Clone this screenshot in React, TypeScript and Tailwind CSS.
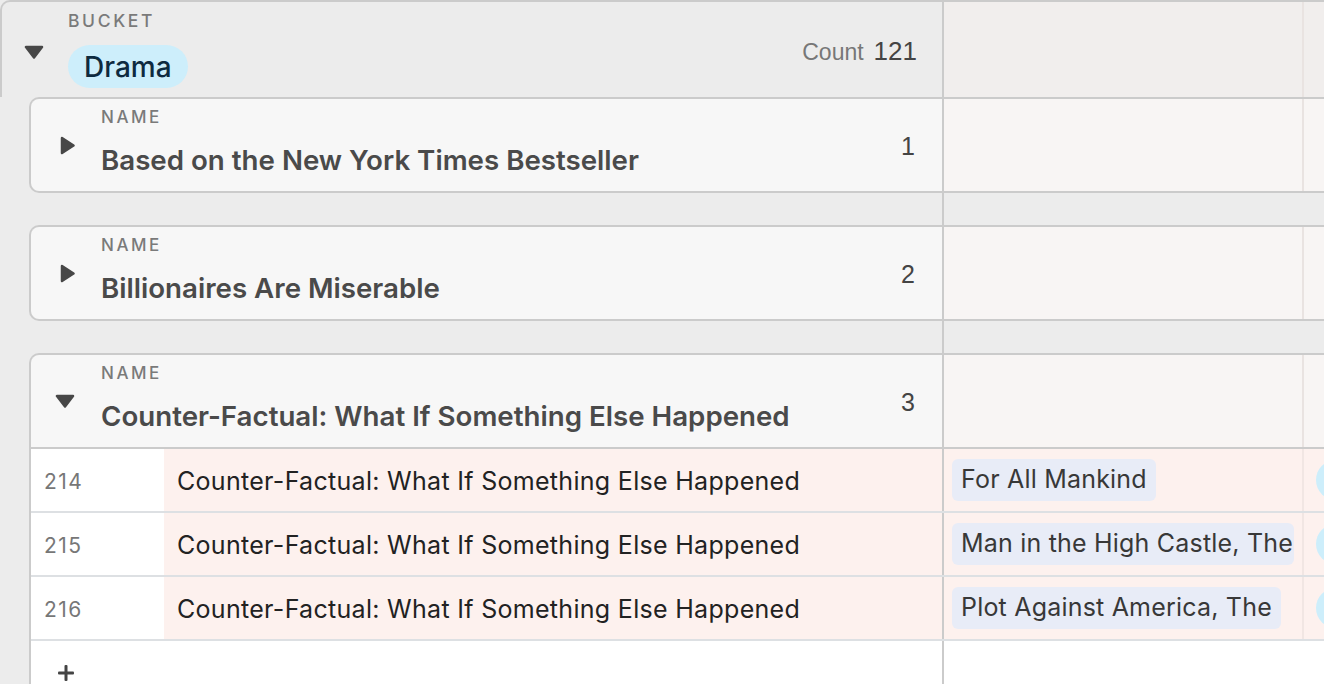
import React from "react";

const FONT = { fontFamily: 'Inter, "Noto Sans", sans-serif' };

function TriDown({ className = "" }: { className?: string }) {
  return (
    <svg width="20" height="14" viewBox="0 0 20 14" className={className}>
      <path d="M2 2 H18 L10 12.5 Z" fill="#474747" stroke="#474747" strokeWidth="2.5" strokeLinejoin="round" />
    </svg>
  );
}

function TriRight() {
  return (
    <svg width="15" height="19" viewBox="0 0 15 19">
      <path d="M2 2 L13.5 9.5 L2 17 Z" fill="#474747" stroke="#474747" strokeWidth="2.5" strokeLinejoin="round" />
    </svg>
  );
}

function Plus() {
  return (
    <svg width="16" height="16" viewBox="0 0 16 16">
      <rect x="6.5" y="0" width="3" height="16" rx="1" fill="#444" />
      <rect x="0" y="6.5" width="16" height="3" rx="1" fill="#444" />
    </svg>
  );
}

function RightCells({ bg, border = "" }: { bg: string; border?: string }) {
  return (
    <>
      <div className="w-[2px] shrink-0 bg-[#cbcbcb]" />
      <div className={`w-[358px] shrink-0 ${bg} ${border}`} />
      <div className={`w-[2px] shrink-0 bg-[#e9e3e1] ${border}`} />
      <div className={`flex-1 ${bg} ${border}`} />
    </>
  );
}

function GroupCard({ title, count, open = false }: { title: string; count: string; open?: boolean }) {
  return (
    <div className="flex h-[96px]">
      <div className="w-[29px] shrink-0" />
      <div
        className={`w-[913px] shrink-0 flex items-center bg-[#f7f7f7] border-[#cbcbcb] ${
          open ? "border-t-2 border-l-2 border-b-2 rounded-tl-[10px]" : "border-t-2 border-l-2 border-b-2 rounded-l-[10px]"
        }`}
      >
        <div className={`${open ? "pl-[24px] w-[44px]" : "pl-[29px] w-[44px]"} shrink-0 flex items-center`}>
          {open ? <TriDown /> : <TriRight />}
        </div>
        <div className="ml-[26px] self-start pt-[8px] flex flex-col">
          <div className="text-[17px] leading-[20px] tracking-[0.15em] font-medium text-[#7a7a7a]">NAME</div>
          <div className="mt-[16px] text-[27.7px] leading-[34px] font-semibold text-[#4a4a4a] whitespace-nowrap">{title}</div>
        </div>
        <div className="flex-1" />
        <div className="pr-[27px] pt-[4px] text-[25px] text-[#444]" style={{ fontFamily: '"Liberation Sans", Arial, sans-serif' }}>
          {count}
        </div>
      </div>
      <RightCells bg="bg-[#f8f5f4]" border="border-y-2 border-[#cbcbcb]" />
    </div>
  );
}

function Gap() {
  return (
    <div className="flex h-[32px]">
      <div className="w-[942px] shrink-0" />
      <div className="w-[2px] shrink-0 bg-[#cbcbcb]" />
      <div className="flex-1" />
    </div>
  );
}

function DataRow({ n, name, tag }: { n: string; name: string; tag: string }) {
  return (
    <div className="flex h-[64px] border-b-2 border-[#dde0e3]">
      <div className="w-[133px] shrink-0 bg-white flex items-center pl-[13px] pt-[3px] text-[21px] tracking-[1.5px] text-[#777]">{n}</div>
      <div className="w-[778px] shrink-0 bg-[#fdf1ee] flex items-center pl-[13px] pt-[3px] text-[25px] tracking-[0.3px] text-[#222] whitespace-nowrap">
        {name}
      </div>
      <div className="w-[2px] shrink-0 bg-[#cbcbcb]" />
      <div className="w-[358px] shrink-0 bg-[#fdf1ee] flex items-center px-[8px] overflow-hidden">
        <div className="h-[42px] max-w-[342px] overflow-hidden whitespace-nowrap rounded-[6px] bg-[#e8ecf7] px-[9px] flex items-center text-[25px] tracking-[0.2px] text-[#383838]">
          {tag}
        </div>
      </div>
      <div className="w-[2px] shrink-0 bg-[#f1e6e3]" />
      <div className="flex-1 bg-[#fdf1ee] flex items-center pl-[12px] overflow-hidden">
        <div className="h-[40px] w-[40px] rounded-full bg-[#cdeefb]" />
      </div>
    </div>
  );
}

export default function App() {
  return (
    <div className="w-[1324px] h-[684px] overflow-hidden bg-[#ececec]" style={FONT}>
      <div className="w-[1420px]">
        {/* bucket header */}
        <div className="flex h-[97px] border-t-2 border-l-2 border-[#cbcbcb] rounded-tl-[10px]">
          <div className="w-[940px] shrink-0 flex">
            <div className="pl-[22px] pt-[43px] shrink-0">
              <TriDown />
            </div>
            <div className="ml-[24px] flex flex-col">
              <div className="mt-[9px] text-[17.5px] leading-[20px] tracking-[0.15em] font-medium text-[#7a7a7a]">BUCKET</div>
              <div className="mt-[14px] h-[43px] rounded-full bg-[#cdeefb] px-[16px] flex items-center text-[28px] font-medium text-[#0e2a3f]">
                Drama
              </div>
            </div>
            <div className="flex-1" />
            <div className="pr-[25px] pt-[30px] flex items-baseline gap-[10px]" style={{ fontFamily: '"Liberation Sans", Arial, sans-serif' }}>
              <span className="text-[23px] text-[#777]">Count</span>
              <span className="text-[26px] text-[#444]">121</span>
            </div>
          </div>
          <RightCells bg="bg-[#f1eeed]" />
        </div>

        <GroupCard title="Based on the New York Times Bestseller" count="1" />
        <Gap />
        <GroupCard title="Billionaires Are Miserable" count="2" />
        <Gap />
        <GroupCard title="Counter-Factual: What If Something Else Happened" count="3" open />

        <div className="flex">
          <div className="w-[29px] shrink-0" />
          <div className="border-l-2 border-[#cbcbcb] flex-1">
            <DataRow n="214" name="Counter-Factual: What If Something Else Happened" tag="For All Mankind" />
            <DataRow n="215" name="Counter-Factual: What If Something Else Happened" tag="Man in the High Castle, The" />
            <DataRow n="216" name="Counter-Factual: What If Something Else Happened" tag="Plot Against America, The" />
            <div className="flex h-[60px]">
              <div className="w-[911px] shrink-0 bg-white pl-[27px] pt-[24px]">
                <Plus />
              </div>
              <div className="w-[2px] shrink-0 bg-[#cbcbcb]" />
              <div className="flex-1 bg-white" />
            </div>
          </div>
        </div>
      </div>
    </div>
  );
}
